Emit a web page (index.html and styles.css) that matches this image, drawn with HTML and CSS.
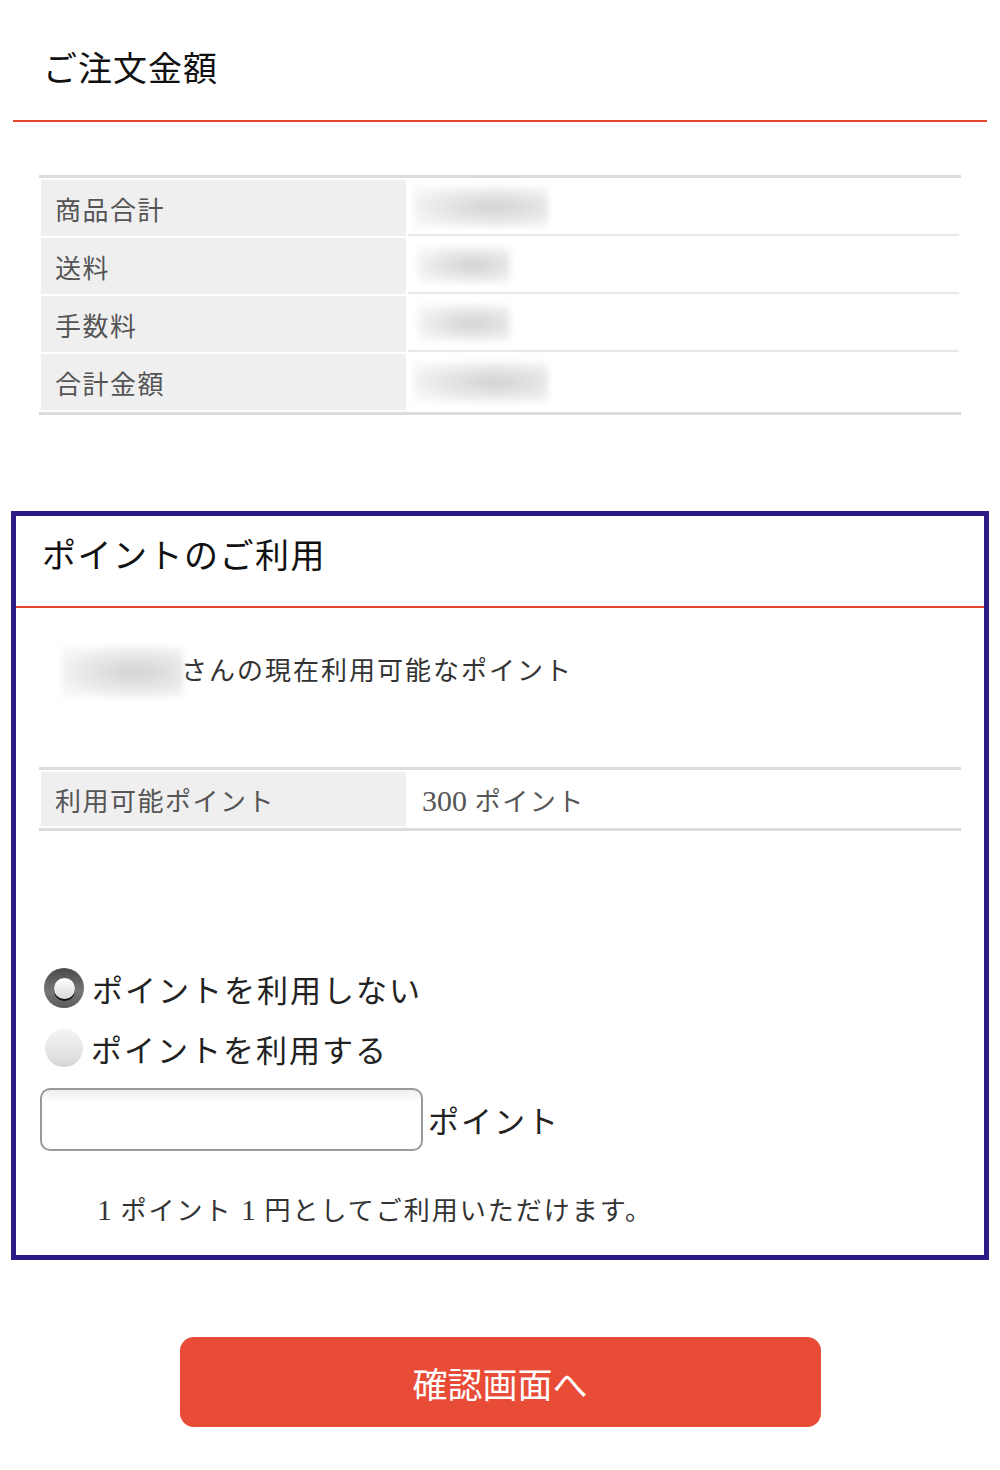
FILE: index.html
```html
<!DOCTYPE html>
<html lang="ja">
<head>
<meta charset="utf-8">
<title>ご注文金額</title>
<link rel="stylesheet" href="styles.css">
</head>
<body>
<div class="page">
  <section class="order">
    <h2 class="section-title">ご注文金額</h2>
    <table class="info-table">
      <tr><th>商品合計</th><td><span class="blur blur-wide"></span></td></tr>
      <tr><th>送料</th><td><span class="blur blur-short"></span></td></tr>
      <tr><th>手数料</th><td><span class="blur blur-short"></span></td></tr>
      <tr class="last"><th>合計金額</th><td><span class="blur blur-wide"></span></td></tr>
    </table>
  </section>

  <section class="points">
    <h2 class="points-title">ポイントのご利用</h2>
    <p class="holder"><span class="blur blur-name"></span>さんの現在利用可能なポイント</p>
    <table class="info-table points-table">
      <tr class="last"><th>利用可能ポイント</th><td class="value"><span class="num">300</span> ポイント</td></tr>
    </table>
    <div class="choices">
      <label class="choice"><span class="radio radio-on"></span>ポイントを利用しない</label>
      <label class="choice"><span class="radio radio-off"></span>ポイントを利用する</label>
      <div class="amount"><span class="amount-input"></span><span class="amount-unit">ポイント</span></div>
    </div>
    <p class="note"><span class="num">1</span> ポイント <span class="num">1</span> 円としてご利用いただけます。</p>
  </section>

  <div class="actions">
    <button class="confirm" type="button">確認画面へ</button>
  </div>
</div>
</body>
</html>
```

FILE: styles.css
```css
html, body {
  margin: 0;
  padding: 0;
  background: #fff;
}
body {
  font-family: "Liberation Serif", "Noto Sans CJK JP", serif;
  color: #333;
}
.page {
  padding: 0 11px 46px;
}

/* order section */
.order {
  margin: 0 2px;
}
.section-title {
  margin: 0;
  padding: 45px 0 25px 30px;
  font-size: 34px;
  line-height: 50px;
  font-weight: 400;
  letter-spacing: 1px;
  color: #111;
  border-bottom: 2px solid #e8452f;
}

.info-table {
  margin: 53px 26px 0;
  width: calc(100% - 52px);
  border-collapse: separate;
  border-spacing: 2px;
  border-top: 3px solid #dcdcdc;
  border-bottom: 3px solid #dcdcdc;
}
.info-table th {
  width: 365px;
  height: 56px;
  padding: 0 0 0 14px;
  background: #efefef;
  text-align: left;
  font-weight: 400;
  font-size: 26px;
  letter-spacing: 1.5px;
  color: #555;
  box-sizing: border-box;
}
.info-table td {
  height: 56px;
  padding: 0 0 0 6px;
  border-bottom: 2px solid #e8e8e8;
  box-sizing: border-box;
  font-size: 26px;
  color: #555;
  letter-spacing: 1.5px;
}
.info-table tr.last td {
  border-bottom: none;
}
.num {
  font-size: 1.15em;
  letter-spacing: 0;
}
.blur {
  display: inline-block;
  vertical-align: middle;
  background: radial-gradient(ellipse at 60% 50%, #d2d2d2 0%, #e6e6e6 45%, #f6f6f6 80%);
  filter: blur(3px);
}
.blur-wide {
  width: 134px;
  height: 40px;
}
.blur-short {
  width: 92px;
  height: 36px;
  margin-left: 4px;
}
.blur-name {
  width: 121px;
  height: 50px;
  margin-right: -2px;
}

/* points section */
.points {
  margin-top: 96px;
  border: 5px solid #2e1a87;
}
.points-title {
  margin: 0;
  padding: 16px 0 24px 26px;
  font-size: 34px;
  line-height: 50px;
  font-weight: 400;
  letter-spacing: 1.5px;
  color: #111;
  border-bottom: 2px solid #e8452f;
}
.holder {
  margin: 39px 0 0 46px;
  font-size: 26px;
  line-height: 50px;
  letter-spacing: 2px;
  color: #333;
  display: flex;
  align-items: center;
}
.points-table {
  margin: 70px 23px 0;
  width: calc(100% - 46px);
}
.points-table th,
.points-table td {
  height: 54px;
}
.points-table td.value {
  padding-left: 14px;
}

.choices {
  margin: 127px 0 0 23px;
  display: flex;
  flex-direction: column;
}
.choice {
  display: flex;
  align-items: center;
  gap: 8px;
  height: 60px;
  margin-left: 5px;
  font-size: 31px;
  letter-spacing: 2px;
  color: #222;
}
.radio {
  width: 40px;
  height: 40px;
  border-radius: 50%;
  box-sizing: border-box;
  flex: none;
}
.radio-on {
  background: linear-gradient(#4a4a4a, #777 60%, #5a5a5a);
  display: flex;
  align-items: center;
  justify-content: center;
}
.radio-on::after {
  content: "";
  width: 21px;
  height: 21px;
  border-radius: 50%;
  background: linear-gradient(#ffffff, #d9d9d9);
  box-shadow: 0 2px 0 #111;
}
.radio-off {
  width: 38px;
  height: 38px;
  margin-left: 1px;
  background: linear-gradient(#f4f4f4, #e2e2e2 70%, #d4d4d4);
}
.amount {
  display: flex;
  align-items: center;
  gap: 5px;
  margin-top: 10px;
}
.amount-input {
  display: block;
  width: 383px;
  height: 63px;
  box-sizing: border-box;
  border: 2px solid #9a9a9a;
  border-radius: 10px;
  background: linear-gradient(#eeeeee, #ffffff 12px);
  margin-left: 1px;
}
.amount-unit {
  font-size: 31px;
  letter-spacing: 2px;
  color: #222;
}
.note {
  margin: 34px 0 0 81px;
  padding-bottom: 18px;
  font-size: 26px;
  line-height: 50px;
  letter-spacing: 2px;
  color: #333;
}

/* action */
.actions {
  display: flex;
  justify-content: center;
  margin-top: 77px;
}
.confirm {
  width: 641px;
  height: 90px;
  border: none;
  border-radius: 14px;
  background: #e84c36;
  color: #fff;
  font-family: "Noto Sans CJK JP", sans-serif;
  font-size: 35px;
  font-weight: 400;
  letter-spacing: 0;
  cursor: pointer;
}
```
